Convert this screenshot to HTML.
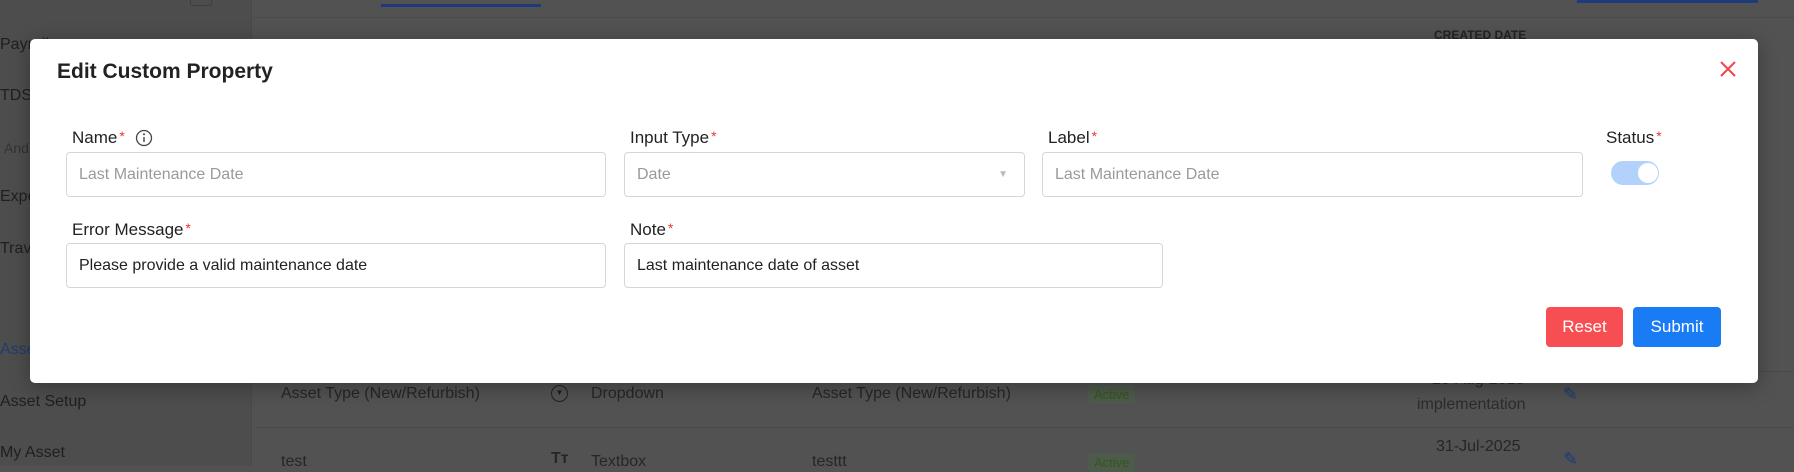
<!DOCTYPE html>
<html style="background:#525252"><head><meta charset="utf-8"><style>
*{box-sizing:border-box;margin:0;padding:0}
html,body{background:#525252}
body{width:1794px;height:466px;overflow:hidden;font-family:"Liberation Sans",sans-serif;position:relative;color:#1e1e1e}
.a{position:absolute;white-space:nowrap}
.side{left:0;top:0;width:252px;height:466px;background:#4d4d4d;border-right:1px solid #484848}
.st{font-size:16px;color:#1f1f1f}
.bg{font-size:16px;color:#262626}
.modal{left:30px;top:39px;width:1728px;height:344px;background:#fff;border-radius:5px;box-shadow:0 4px 20px rgba(0,0,0,.3)}
.lbl{font-size:17px;color:#222}
.lbl b{color:#e53935;font-weight:normal;font-size:14px;vertical-align:top;margin-left:2px}
.inp{height:45px;border:1px solid #d6d6d6;border-radius:4px;font-size:16px;padding:0 12px;line-height:43px;color:#222}
.ph{color:#9a9a9a}
.btn{height:40px;border-radius:4px;color:#fff;font-size:17px;text-align:center;line-height:40px}
.act{font-size:13px;color:#2f5a1a;background:#4e5a4c;padding:2px 6px;border-radius:3px}
</style></head><body>
<div class="a side"></div>
<div class="a" style="left:381px;top:4px;width:160px;height:3px;background:#1d3a7a"></div>
<div class="a" style="left:1577px;top:0;width:181px;height:3px;background:#1d3a7a"></div>
<div class="a" style="left:254px;top:17px;width:1540px;height:1px;background:#4a4a4a"></div>
<div class="a" style="left:190px;top:-6px;width:22px;height:12px;border:1px solid #3e3e3e;border-radius:3px"></div>
<div class="a st" style="left:0;top:36px">Payroll</div>
<div class="a st" style="left:0;top:87px">TDS</div>
<div class="a st" style="left:4px;top:140px;font-size:14px;color:#333">And</div>
<div class="a st" style="left:0;top:188px">Expense</div>
<div class="a st" style="left:0;top:240px">Travel</div>
<div class="a st" style="left:0;top:341px;color:#1f3c70">Asset</div>
<div class="a st" style="left:0;top:393px">Asset Setup</div>
<div class="a st" style="left:0;top:444px">My Asset</div>
<div class="a" style="left:1434px;top:28px;font-size:12px;font-weight:bold;color:#222">CREATED DATE</div>
<div class="a" style="left:254px;top:371px;width:1540px;height:1px;background:#4a4a4a"></div>
<div class="a" style="left:254px;top:427px;width:1540px;height:1px;background:#4a4a4a"></div>
<div class="a bg" style="left:281px;top:385px">Asset Type (New/Refurbish)</div>
<div class="a" style="left:551px;top:385px;width:17px;height:17px;border:1.5px solid #222;border-radius:50%;font-size:8px;text-align:center;line-height:14px">▼</div>
<div class="a bg" style="left:591px;top:385px">Dropdown</div>
<div class="a bg" style="left:812px;top:385px">Asset Type (New/Refurbish)</div>
<div class="a act" style="left:1088px;top:385px">Active</div>
<div class="a bg" style="left:1432px;top:371px">20-Aug-2025</div>
<div class="a bg" style="left:1417px;top:396px;color:#2c2c2c">implementation</div>
<div class="a" style="left:1563px;top:384px;font-size:18px;color:#1d3a7a">✎</div>
<div class="a bg" style="left:281px;top:453px">test</div>
<div class="a bg" style="left:551px;top:450px;font-weight:bold">Tт</div>
<div class="a bg" style="left:591px;top:453px">Textbox</div>
<div class="a bg" style="left:812px;top:453px">testtt</div>
<div class="a act" style="left:1088px;top:453px">Active</div>
<div class="a bg" style="left:1436px;top:438px">31-Jul-2025</div>
<div class="a" style="left:1563px;top:449px;font-size:18px;color:#1d3a7a">✎</div>

<div class="a modal"></div>
<div class="a" style="left:57px;top:60px;font-size:21px;font-weight:bold;color:#222">Edit Custom Property</div>
<svg class="a" style="left:1719px;top:60px" width="18" height="18" viewBox="0 0 18 18"><path d="M2 2L16 16M16 2L2 16" stroke="#f0474a" stroke-width="2"/></svg>

<div class="a lbl" style="left:72px;top:128px">Name<b>*</b></div>
<svg class="a" style="left:135px;top:129px" width="18" height="18" viewBox="0 0 18 18"><circle cx="9" cy="9" r="7.5" fill="none" stroke="#444" stroke-width="1.3"/><circle cx="9" cy="5.3" r="1" fill="#444"/><path d="M9 8v5" stroke="#444" stroke-width="1.4"/></svg>
<div class="a lbl" style="left:630px;top:128px">Input Type<b>*</b></div>
<div class="a lbl" style="left:1048px;top:128px">Label<b>*</b></div>
<div class="a lbl" style="left:1606px;top:128px">Status<b>*</b></div>

<div class="a inp ph" style="left:66px;top:152px;width:540px">Last Maintenance Date</div>
<div class="a inp ph" style="left:624px;top:152px;width:401px;background:#fff">Date<span style="position:absolute;right:16px;top:0;font-size:10px;color:#bbb">▼</span></div>
<div class="a inp ph" style="left:1042px;top:152px;width:541px">Last Maintenance Date</div>
<div class="a" style="left:1611px;top:161px;width:48px;height:24px;border-radius:12px;background:#b3d2fb"></div>
<div class="a" style="left:1638px;top:163px;width:20px;height:20px;border-radius:50%;background:#fff"></div>

<div class="a lbl" style="left:72px;top:220px">Error Message<b>*</b></div>
<div class="a lbl" style="left:630px;top:220px">Note<b>*</b></div>
<div class="a inp" style="left:66px;top:243px;width:540px">Please provide a valid maintenance date</div>
<div class="a inp" style="left:624px;top:243px;width:539px">Last maintenance date of asset</div>

<div class="a btn" style="left:1546px;top:307px;width:77px;background:#f64e52">Reset</div>
<div class="a btn" style="left:1633px;top:307px;width:88px;background:#1a7cf5">Submit</div>
</body></html>
